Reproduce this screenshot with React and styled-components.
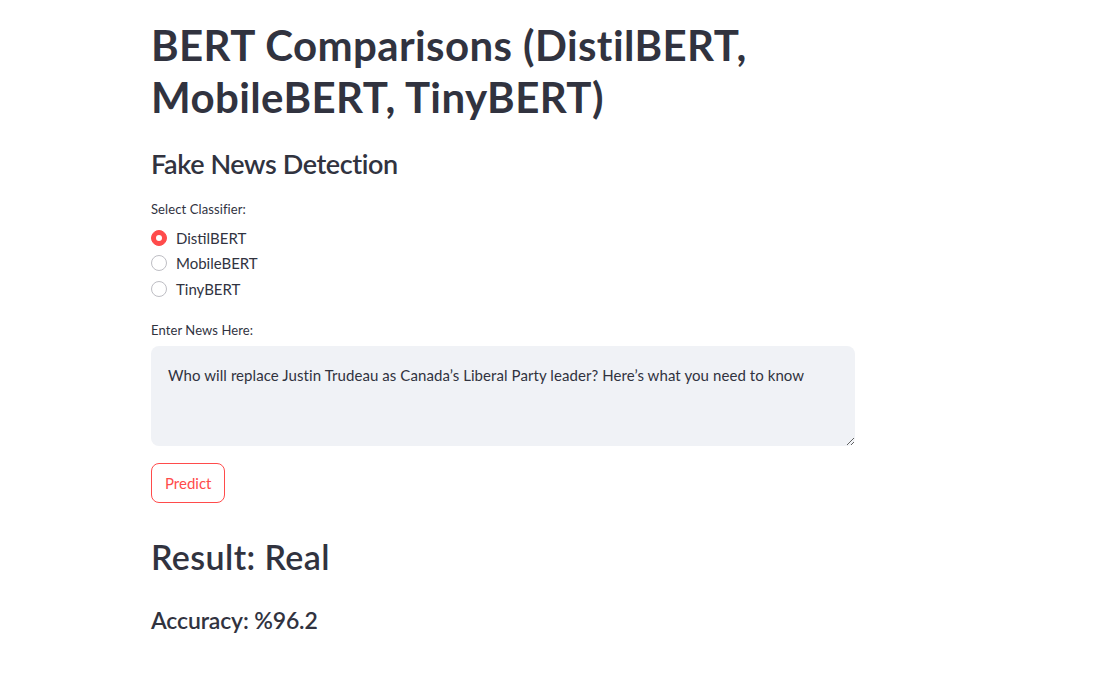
import React from "react";
import styled, { createGlobalStyle } from "styled-components";

const Global = createGlobalStyle`
  html, body { margin: 0; padding: 0; background: #ffffff; }
  body { font-family: "Lato", "Noto Sans", sans-serif; color: rgb(49, 51, 63); }
  * { box-sizing: border-box; }
`;

const Main = styled.main`
  width: 704px;
  margin-left: 151px;
  padding-top: 19px;
  display: flex;
  flex-direction: column;
`;

const Title = styled.h1`
  margin: 0;
  font-size: 42px;
  font-weight: 700;
  line-height: 52px;
  letter-spacing: 0.4px;
`;

const Subheader = styled.h3`
  margin: 23px 0 0;
  font-size: 27px;
  font-weight: 600;
  line-height: 36px;
  letter-spacing: -0.4px;
`;

const FieldLabel = styled.label`
  display: block;
  font-size: 13px;
  line-height: 18px;
  letter-spacing: 0.1px;
  margin-top: ${(p) => p.$top || 0}px;
`;

const RadioGroup = styled.div`
  display: flex;
  flex-direction: column;
  margin-top: 7px;
`;

const RadioRow = styled.div`
  display: flex;
  align-items: center;
  gap: 9px;
  height: 25.5px;
  font-size: 15px;
`;

const Dot = styled.span`
  width: 16px;
  height: 16px;
  border-radius: 50%;
  flex: none;
  background: ${(p) => (p.$on ? "rgb(255, 75, 75)" : "#fff")};
  border: 1px solid ${(p) => (p.$on ? "rgb(255, 75, 75)" : "rgb(190, 190, 196)")};
  display: flex;
  align-items: center;
  justify-content: center;
  &::after {
    content: "";
    display: ${(p) => (p.$on ? "block" : "none")};
    width: 6px;
    height: 6px;
    border-radius: 50%;
    background: #fff;
  }
`;

const TextArea = styled.textarea`
  margin-top: 7px;
  width: 704px;
  height: 100px;
  background: rgb(240, 242, 246);
  border: none;
  border-radius: 8px;
  padding: 17px 17px 16px;
  font-family: inherit;
  font-size: 15px;
  line-height: 24px;
  letter-spacing: 0.08px;
  color: rgb(49, 51, 63);
  resize: vertical;
  outline: none;
`;

const Button = styled.button`
  align-self: flex-start;
  margin-top: 17px;
  height: 40px;
  padding: 0 13px;
  background: #fff;
  border: 1px solid rgb(255, 75, 75);
  border-radius: 8px;
  color: rgb(255, 75, 75);
  font-family: inherit;
  font-size: 15px;
  cursor: pointer;
`;

const Result = styled.h2`
  margin: 32px 0 0;
  font-size: 34px;
  font-weight: 600;
  line-height: 44px;
  letter-spacing: 0.4px;
`;

const Accuracy = styled.h4`
  margin: 25px 0 0;
  font-size: 23px;
  font-weight: 600;
  line-height: 32px;
  letter-spacing: -0.15px;
`;

const options = ["DistilBERT", "MobileBERT", "TinyBERT"];

export default function App() {
  return (
    <>
      <Global />
      <Main>
        <Title>BERT Comparisons (DistilBERT, MobileBERT, TinyBERT)</Title>
        <Subheader>Fake News Detection</Subheader>
        <FieldLabel $top={18}>Select Classifier:</FieldLabel>
        <RadioGroup>
          {options.map((o, i) => (
            <RadioRow key={o}>
              <Dot $on={i === 0} />
              <span>{o}</span>
            </RadioRow>
          ))}
        </RadioGroup>
        <FieldLabel $top={19}>Enter News Here:</FieldLabel>
        <TextArea defaultValue="Who will replace Justin Trudeau as Canada’s Liberal Party leader? Here’s what you need to know" />
        <Button>Predict</Button>
        <Result>Result: Real</Result>
        <Accuracy>Accuracy: %96.2</Accuracy>
      </Main>
    </>
  );
}
